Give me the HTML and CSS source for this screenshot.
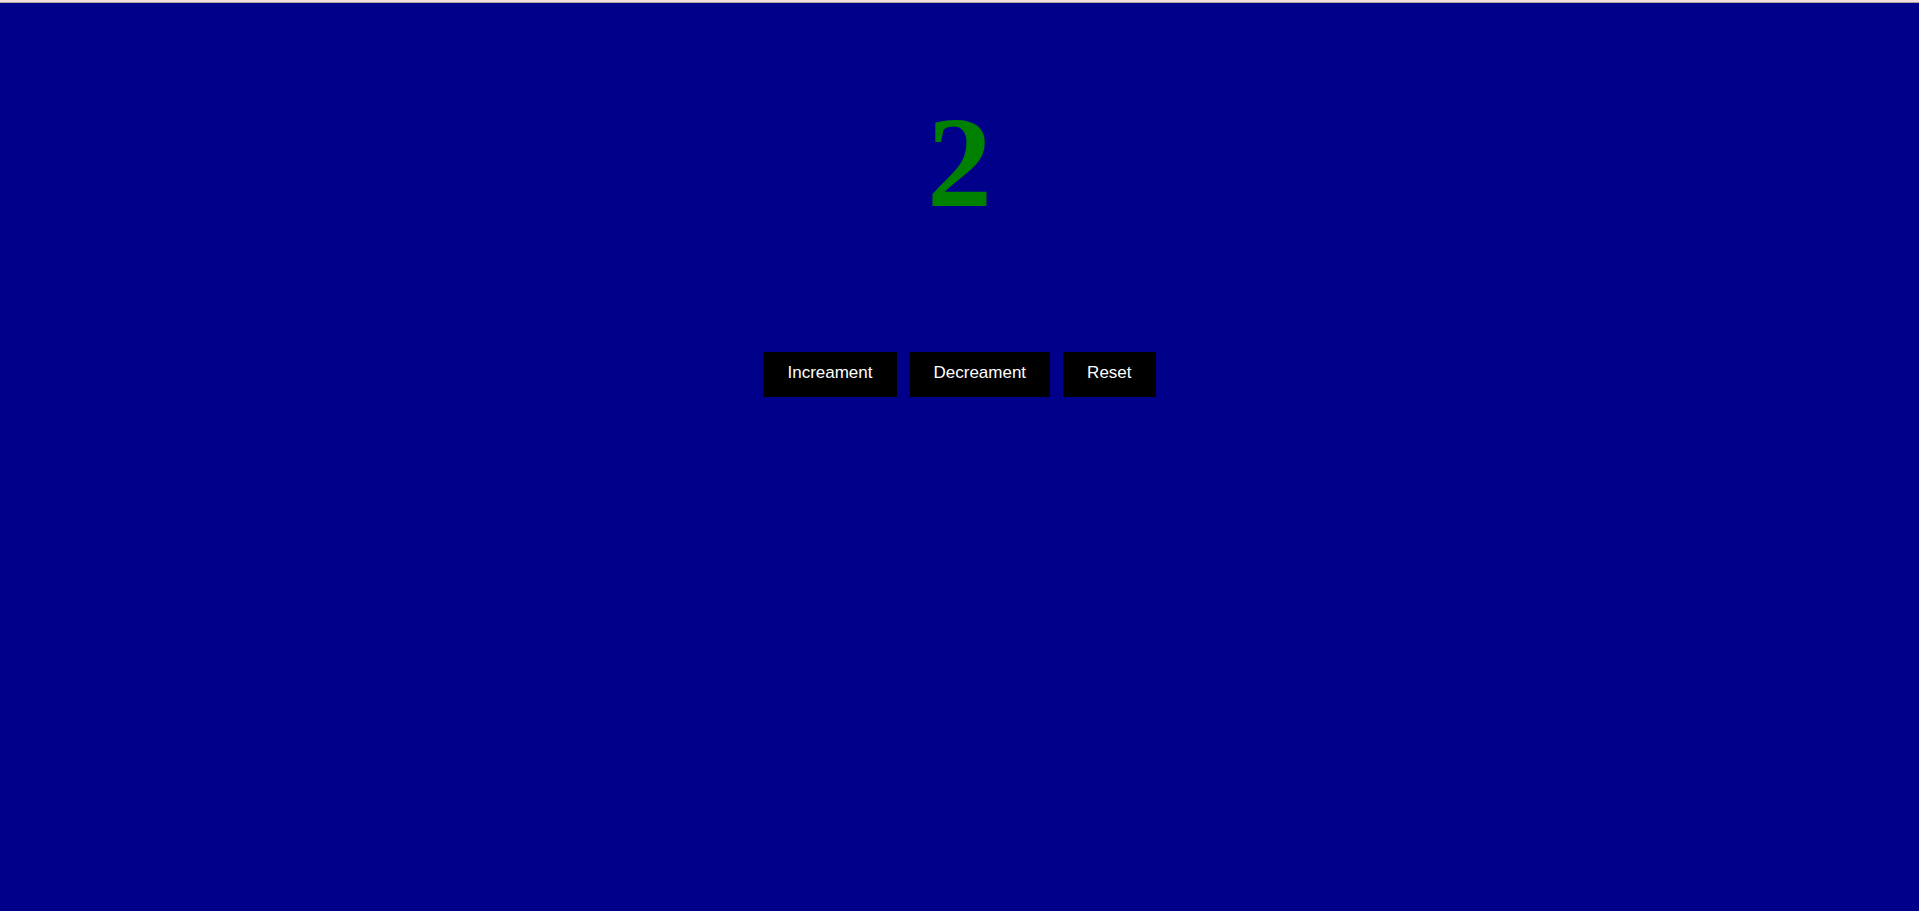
FILE: index.html
```html
<!DOCTYPE html>
<html lang="en">
<head>
<meta charset="utf-8">
<title>Counter</title>
<link rel="stylesheet" href="styles.css">
</head>
<body class="page">
<main class="counter">
<h1 class="count" id="count">2</h1>
<div class="actions">
<button class="btn" type="button">Increament</button>
<button class="btn" type="button">Decreament</button>
<button class="btn" type="button">Reset</button>
</div>
</main>
</body>
</html>
```

FILE: styles.css
```css
.page {
  margin: 0;
  min-height: 100vh;
  box-sizing: border-box;
  background: #00008b;
  border-top: 2px solid #f0dfdf;
}

.counter {
  display: flex;
  flex-direction: column;
  align-items: center;
  gap: 125px;
  padding-top: 94px;
  border-top: 1px solid #b8a39a;
}

.count {
  margin: 0;
  font: bold 130px/1 "Liberation Serif", "Times New Roman", serif;
  color: #008000;
}

.actions {
  display: flex;
  gap: 13px;
}

.btn {
  padding: 11px 24px 14px;
  border: 0;
  background: #000;
  color: #fff;
  font: 17px/20px "Liberation Sans", Arial, sans-serif;
  cursor: pointer;
}
```
